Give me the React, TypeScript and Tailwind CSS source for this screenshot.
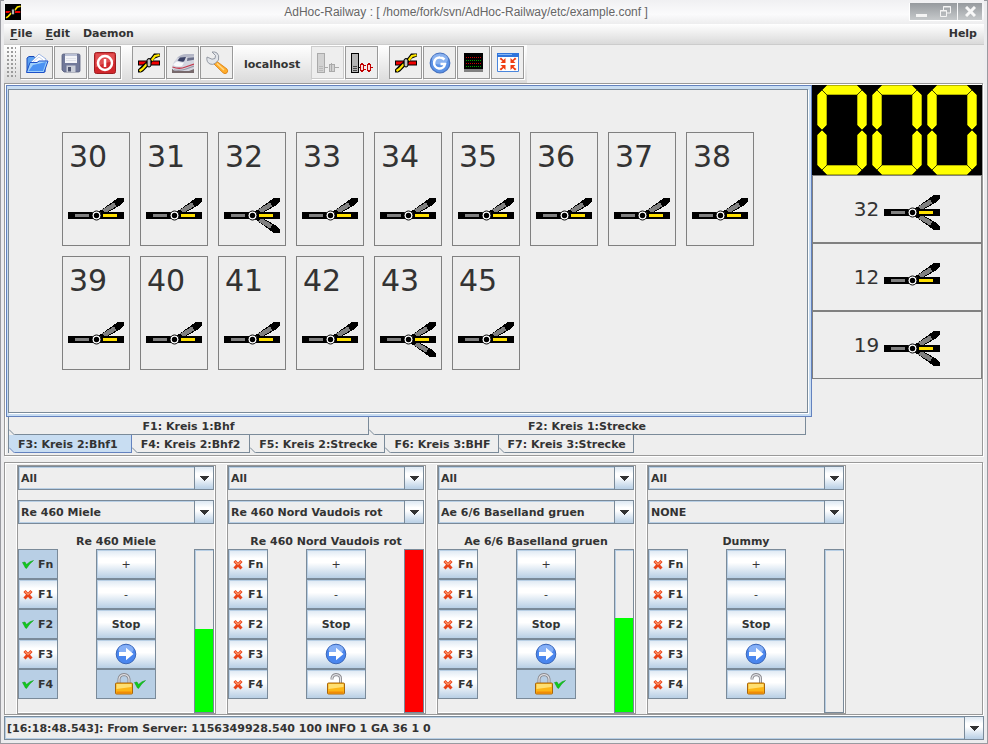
import React from "react";

type IconProps = { className?: string };

const bevel = "bg-[linear-gradient(#dde8f3,#ffffff_30%,#ffffff_45%,#b8cfe5)]";
const etched = "border border-[#999999] shadow-[inset_1px_1px_white,1px_1px_white]";

/* ---------- track drawings ---------- */

function Turnout({ threeWay = false }: { threeWay?: boolean }) {
  return (
    <svg width="56" height="35" viewBox="0 0 56 35" shapeRendering="crispEdges" aria-hidden="true">
      <path d="M29 15 50 0h6v4L51 8 35 17z" fill="#000" />
      <path d="M34.500 11.500 46 4.500l2.500 3.500L37.500 15z" fill="#808080" />
      {threeWay && (
        <>
          <path d="M29 20 50 35h6v-4l-5-4-16-9z" fill="#000" />
          <path d="M34.500 23.500 46 30.500l2.500-3.500L37.500 20z" fill="#808080" />
        </>
      )}
      <path d="M0 14h56v7H0z" fill="#000" />
      <path d="M7 16h14v3H7z" fill="#808080" />
      <path d="M35 16h14v3H35z" fill="#ffe000" />
      <g shapeRendering="auto">
        <circle cx="28.500" cy="17.500" r="4.500" fill="#fff" stroke="#000" strokeWidth="1" />
        <circle cx="28.500" cy="17.500" r="2.700" fill="#000" />
      </g>
    </svg>
  );
}

function CrossingIcon({ className = "h-[22px] w-[22px]" }: IconProps) {
  return (
    <svg className={className} viewBox="0 0 22 22" aria-hidden="true">
      <path d="M0 8.500h22v5H0z" fill="#000" />
      <path d="M1 9.500h8v3H1zM13 9.500h8v3h-8z" fill="#f00000" />
      <path d="M0 20.500v-3l4-4 9-8 3-4h6v3l-5 2-5 6-7 7-2 1z" fill="#000" />
      <path d="M1.500 19 4.500 17 9 12M13.500 8.500 17 4l4.500-1" stroke="#ffe800" strokeWidth="2.200" fill="none" />
      <rect x="9" y="6.500" width="4" height="8.500" rx="2" fill="#999" stroke="#000" />
      <path d="M11 8v6" stroke="#eee" />
    </svg>
  );
}

function FolderIcon() {
  return (
    <svg width="24" height="22" viewBox="0 0 24 22" aria-hidden="true">
      <path d="M2 20V6l2-1.500h5l2 2h9V20z" fill="#5aa0f0" stroke="#1848b8" />
      <path d="m5 11 9-9 7 5-1 9H6z" fill="#fff" stroke="#8aa8e0" strokeWidth=".8" />
      <path d="m8 10 6-5 4 3" fill="none" stroke="#c9d6ee" />
      <path d="M1.500 20.500 5 10.500h7l2-1.500h9l-4 11.500z" fill="#9fd0fb" stroke="#1c50c8" />
      <path d="M3.500 19 8 13l13-3-3 9z" fill="#2f7df0" opacity=".75" />
    </svg>
  );
}

function FloppyIcon() {
  return (
    <svg width="20" height="20" viewBox="0 0 20 20" aria-hidden="true">
      <path d="M1 2.500Q1 1 2.500 1h15Q19 1 19 2.500v15q0 1.500-1.500 1.500H3l-2-2z" fill="#71799a" stroke="#565d7c" strokeWidth=".8" />
      <path d="M4 1h12v9H4z" fill="#f3f4f8" />
      <path d="M4 1h12v2H4z" fill="#b9c0d5" />
      <path d="M5.500 12.500h9V19h-9z" fill="#c9cdd8" />
      <path d="M7 14h3v4.500H7z" fill="#4d5470" />
      <path d="M5 5.500h10M5 7.500h10" stroke="#d4d8e2" strokeWidth=".7" />
    </svg>
  );
}

function PowerIcon() {
  return (
    <svg width="24" height="24" viewBox="0 0 24 24" aria-hidden="true">
      <rect x="1.500" y="1.500" width="21" height="21" rx="2" fill="#d0272c" stroke="#9c1c20" />
      <path d="M2.500 2.500h19v8q-9 0-19 6z" fill="#ec6a6c" opacity=".6" />
      <circle cx="12" cy="12" r="7" fill="none" stroke="#fff" strokeWidth="2.500" />
      <path d="M12 8v8" stroke="#fff" strokeWidth="2.500" />
    </svg>
  );
}

function TrainIcon() {
  return (
    <svg width="22" height="20" viewBox="0 0 22 20" aria-hidden="true">
      <path d="M0 16h22v4H0z" fill="#77696c" />
      <path d="M22 1v15l-5 2H5q-5 0-5-4 1-5 5-9 4-4 10-4z" fill="#d3d5e0" />
      <path d="M5 5q4-4 10-4h7v2.500l-8 .5z" fill="#b3b6c6" />
      <path d="M5.500 7.500 8 4.500l6-.5-2 4.500q-3.500.5-6.500-1z" fill="#3b4267" />
      <path d="m15.500 4.800 6.500-.6v2.600l-7 1.200z" fill="#6a6f8a" />
      <path d="M1 12q2-3 4-3.500 3 1.500 7 1L10 13q-4 1.500-9-1z" fill="#f8f9fc" />
      <path d="M.5 14q7 2.500 13 0L22 11" stroke="#c43a4c" strokeWidth="1.300" fill="none" />
      <path d="M2 17q7 1 12-1l8-3" stroke="#9a98a6" strokeWidth="1.200" fill="none" />
    </svg>
  );
}

function WrenchIcon() {
  return (
    <svg width="24" height="24" viewBox="0 0 24 24" aria-hidden="true">
      <path d="M12 10.500 22 18q1.500 2 0 3.800-2 1.700-4 0L9 13z" fill="#ffad2b" stroke="#d97a0b" strokeWidth=".8" />
      <path d="m12 12.500 7 6.500" stroke="#ffd98c" strokeWidth="1.500" />
      <path d="M2 6q-1 5 3 7 3 1 5-.5L13.500 9Q14.500 4 12 2q-2-1.500-5-1l3.500 3.500-.5 3-3 .7z" fill="#e2e5ea" stroke="#8a909b" strokeWidth=".9" />
    </svg>
  );
}

function PlugIcon({ dim = false }: { dim?: boolean }) {
  const line = dim ? "#aaaaaa" : "#000000";
  const body = dim ? "#d2d2d2" : "#b4b4b4";
  const plug = dim ? "#aaaaaa" : "#c00000";
  const plugFill = dim ? "#d2d2d2" : "#ffd8d8";
  return (
    <svg width="22" height="20" viewBox="0 0 22 20" shapeRendering="crispEdges" aria-hidden="true">
      <path d="M.5.500h7v19h-7z" fill={body} stroke={line} />
      <path d="M2 13.500h4M2 15.500h4M2 17.500h4" stroke={line} strokeWidth="1" opacity=".6" />
      <path d="M8 14.500h3" stroke={line} />
      {dim ? (
        <>
          <path d="M12.500 11.500h5v7h-5z" fill={plugFill} stroke={plug} />
          <path d="M18 14.500h4M14.500 10v9" stroke={plug} />
        </>
      ) : (
        <>
          <path d="M9.500 11.500h3v6h-3zM16.500 11.500h3v6h-3z" fill={plugFill} stroke={plug} />
          <path d="M10 10.500h2M10 18.500h2M17 10.500h2M17 18.500h2M13 12.500h2M13 16.500h2M20 14.500h2" stroke={plug} />
        </>
      )}
    </svg>
  );
}

function GlobeLetterIcon() {
  return (
    <svg width="22" height="22" viewBox="0 0 22 22" aria-hidden="true">
      <circle cx="11" cy="11" r="9.800" fill="#5b92e6" stroke="#4672c0" strokeWidth="1.200" />
      <ellipse cx="11" cy="7" rx="8" ry="5.500" fill="#a8c8f7" opacity=".6" />
      <path d="M15.500 7.500Q13.500 5.500 11 5.500a5.500 5.500 0 1 0 5 6.500H11.500" fill="none" stroke="#fff" strokeWidth="2.500" />
    </svg>
  );
}

const boardDots = [2, 4, 6, 8, 10, 12, 14, 16];

function BoardIcon() {
  return (
    <svg width="19" height="19" viewBox="0 0 19 19" shapeRendering="crispEdges" aria-hidden="true">
      <path d="M0 0h19v19H0z" fill="#808080" />
      <path d="M0 0h19v16H0z" fill="#000" />
      {boardDots.map((x) => (
        <g key={x}>
          <rect x={x} y="4" width="1" height="1" fill="#d00000" />
          <rect x={x} y="7" width="1" height="1" fill="#00a000" />
          <rect x={x} y="10" width="1" height="1" fill="#d00000" />
          <rect x={x} y="13" width="1" height="1" fill="#00a000" />
        </g>
      ))}
    </svg>
  );
}

function FullscreenIcon() {
  return (
    <svg width="22" height="19" viewBox="0 0 22 19" aria-hidden="true">
      <path d="M.5.500h21v18H.5z" fill="#fff" stroke="#4a86dc" />
      <path d="M0 0h22v4H0z" fill="#2f74dc" />
      <path d="M1 1h14v1H1z" fill="#86b6f4" />
      <path d="M8.500 10H3.500L5.500 8 2.500 6 4 4.500 6.500 7l2-2zM13.500 10h5l-2-2 3-2L18 4.500 15.500 7l-2-2zM8.500 12h-5l2 2-3 2L4 17.500 6.500 15l2 2zM13.500 12h5l-2 2 3 2-1.500 1.500L15.500 15l-2 2z" fill="#f03c10" />
    </svg>
  );
}

function CheckIcon() {
  return (
    <svg width="12" height="9" viewBox="0 0 12 9" className="shrink-0" aria-hidden="true">
      <path d="M.5 2.500 3 2l1.500 2.500Q8 1 11.500.500 7 4 4.500 8.500L3.500 8z" fill="#12c81e" stroke="#0a9a14" strokeWidth=".5" />
    </svg>
  );
}

function CrossIcon() {
  return (
    <svg width="12" height="11" viewBox="0 0 12 11" className="shrink-0" aria-hidden="true">
      <path d="m2.500 2 7 7.500M9.500 2l-7 7.500" stroke="#e8431a" strokeWidth="3" />
      <path d="M3 2.500 6 5.500 9 2.500" stroke="#ff9468" strokeWidth="1.200" fill="none" />
    </svg>
  );
}

function ArrowIcon() {
  return (
    <svg width="22" height="22" viewBox="0 0 22 22" aria-hidden="true">
      <circle cx="11" cy="11" r="9.800" fill="#4a86ee" stroke="#3a66b8" />
      <ellipse cx="11" cy="6.500" rx="7.500" ry="4.500" fill="#a6c6fa" opacity=".65" />
      <path d="M4 9h7V4.800L18.500 11 11 17.200V13H4z" fill="#fff" />
    </svg>
  );
}

function LockIcon({ open = false }: { open?: boolean }) {
  const shackle = open ? "M6 6.500V5q.5-3 4-3.500 4.500.5 4.500 4v6" : "M5 11V6q.5-4 5-4.500 4.500.5 5 4.500v5";
  return (
    <svg width="20" height="22" viewBox="0 0 20 22" className="shrink-0" aria-hidden="true">
      <path d={shackle} fill="none" stroke="#8b8b90" strokeWidth="3" />
      <path d={shackle} fill="none" stroke="#e2e2e6" strokeWidth="1.200" />
      <rect x="1.500" y="10" width="17" height="11" rx="1" fill="#fdb515" stroke="#a8660c" />
      <path d="M2.500 11h15v3l-15 2z" fill="#ffe680" opacity=".85" />
      <path d="M2.500 18.500h15v2h-15z" fill="#f08a08" />
    </svg>
  );
}

/* ---------- window frame ---------- */

function TitleBar() {
  return (
    <header className="flex h-6 items-center bg-[linear-gradient(#f0f0f2,#fbfbfc_60%,#ededee)] pr-0.5">
      <span className="ml-px flex h-4 w-4 items-center justify-center bg-black">
        <CrossingIcon className="h-4 w-4" />
      </span>
      <h1 className="flex-1 pl-0.5 text-center font-['Liberation_Sans',sans-serif] text-[12px] font-normal leading-4 text-[#666666]">
        AdHoc-Railway : [ /home/fork/svn/AdHoc-Railway/etc/example.conf ]
      </h1>
      <div className="flex h-[18px] gap-px border-b border-l border-white">
        <div className="flex w-[47px] bg-[linear-gradient(#969a9e,#c6c9cb)]">
          <button aria-label="Minimize" className="flex flex-1 justify-center pt-[11px]">
            <span className="h-[3px] w-[11px] bg-[#f4f4f4]" />
          </button>
          <button aria-label="Restore" className="flex flex-1 items-center justify-center">
            <svg width="11" height="11" viewBox="0 0 11 11" fill="none" stroke="#f4f4f4">
              <path d="M.5 4.500h6v6h-6zM3.500 4V.500h7v6.500H7" />
              <path d="M3 1h8M0 5h7" />
            </svg>
          </button>
        </div>
        <button aria-label="Close" className="flex w-6 items-center justify-center bg-[linear-gradient(#969a9e,#c6c9cb)]">
          <svg width="11" height="11" viewBox="0 0 11 11" stroke="#f8f8f8" strokeWidth="3">
            <path d="m1 1 9 9M10 1l-9 9" />
          </svg>
        </button>
      </div>
    </header>
  );
}

function MenuBar() {
  return (
    <nav className="flex h-[21px] items-center gap-[13px] border-b border-[#cccccc] bg-[linear-gradient(#ffffff,#dadada)] px-1.5">
      <button className="leading-4"><u className="underline-offset-2">F</u>ile</button>
      <button className="leading-4"><u className="underline-offset-2">E</u>dit</button>
      <button className="leading-4">Daemon</button>
      <button className="ml-auto mr-px leading-4">Help</button>
    </nav>
  );
}

function ToolButton({ label, disabled, children }: { label: string; disabled?: boolean; children: React.ReactNode }) {
  return (
    <button
      aria-label={label}
      disabled={disabled}
      className="flex h-[33px] w-[33px] items-center justify-center border border-[#999999] bg-[#eeeeee] shadow-[1px_1px_white] disabled:border-[#cccccc]"
    >
      {children}
    </button>
  );
}

function ToolBar() {
  return (
    <div className="flex h-[38px]">
      <div className="flex items-start gap-[11px] bg-[linear-gradient(#ffffff,#dadada)] pl-0.5 pr-[3px] pt-px">
        <div className="flex gap-px">
          <span className="mr-[3px] h-[33px] w-2.5 bg-[radial-gradient(circle,#999999_0.7px,transparent_1px)] bg-[size:4px_4px]" />
          <ToolButton label="Open"><FolderIcon /></ToolButton>
          <ToolButton label="Save"><FloppyIcon /></ToolButton>
          <ToolButton label="Exit"><PowerIcon /></ToolButton>
        </div>
        <div className="flex gap-px">
          <ToolButton label="Switches"><CrossingIcon /></ToolButton>
          <ToolButton label="Locomotives"><TrainIcon /></ToolButton>
          <ToolButton label="Preferences"><WrenchIcon /></ToolButton>
        </div>
        <span className="self-center leading-4">localhost</span>
        <div className="flex gap-px">
          <ToolButton label="Connect" disabled><PlugIcon dim /></ToolButton>
          <ToolButton label="Disconnect"><PlugIcon /></ToolButton>
        </div>
        <div className="flex gap-px">
          <ToolButton label="Switch control"><CrossingIcon /></ToolButton>
          <ToolButton label="Refresh"><GlobeLetterIcon /></ToolButton>
          <ToolButton label="Console"><BoardIcon /></ToolButton>
          <ToolButton label="Fullscreen"><FullscreenIcon /></ToolButton>
        </div>
      </div>
    </div>
  );
}

/* ---------- switch panel ---------- */

const switches = [30, 31, 32, 33, 34, 35, 36, 37, 38, 39, 40, 41, 42, 43, 45];
const threeWaySwitches = [32, 43, 19];

function SwitchCell({ id }: { id: number }) {
  return (
    <div className="flex h-[114px] w-[68px] flex-col gap-[25px] border border-[#808080] px-[5px] pt-2">
      <span className="pl-px font-['DejaVu_Sans',sans-serif] text-[30px] font-normal leading-8">{id}</span>
      <Turnout threeWay={threeWaySwitches.includes(id)} />
    </div>
  );
}

function Tab({ label, className, selected = false }: { label: string; className: string; selected?: boolean }) {
  return (
    <button
      role="tab"
      aria-selected={selected}
      className={
        "relative h-[18px] border-b border-r pt-0.5 text-center leading-[15px] whitespace-nowrap " +
        (selected ? "border-[#6382bf] bg-[#c8ddf2] " : "border-[#7a8a99] ") +
        className
      }
    >
      {label}
      <svg className="absolute -bottom-px left-0" width="6" height="6" viewBox="0 0 6 6" aria-hidden="true">
        <path d="M0 0v6h6z" fill="#eeeeee" />
        <path d="m0 .5 5.500 5.500" stroke={selected ? "#6382bf" : "#7a8a99"} />
      </svg>
    </button>
  );
}

function SwitchTabs() {
  return (
    <section className="min-w-0 flex-1 pb-0.5">
      <div className="border border-[#6382bf] bg-[#c8ddf2] pb-[3px] pl-px pr-[3px] pt-[3px]">
        <div className="flex min-h-[324px] justify-center border border-[#7a8a99] bg-[#eeeeee] px-4 pb-[42px] pt-[42px] shadow-[1px_1px_white]">
          <div className="grid grid-cols-9 content-start gap-2.5">
            {switches.map((id) => (
              <SwitchCell key={id} id={id} />
            ))}
          </div>
        </div>
      </div>
      <div role="tablist" className="ml-0.5 mr-1.5 border-l border-[#7a8a99]">
        <div className="flex">
          <Tab label="F1: Kreis 1:Bhf" className="basis-0 grow-[360]" />
          <Tab label="F2: Kreis 1:Strecke" className="basis-0 grow-[437]" />
        </div>
        <div className="flex">
          <Tab label="F3: Kreis 2:Bhf1" className="pl-[9px] pr-[13px]" selected />
          <Tab label="F4: Kreis 2:Bhf2" className="pl-[9px] pr-[9px]" />
          <Tab label="F5: Kreis 2:Strecke" className="pl-[9px] pr-[7px]" />
          <Tab label="F6: Kreis 3:BHF" className="pl-[9px] pr-[7px]" />
          <Tab label="F7: Kreis 3:Strecke" className="pl-[9px] pr-[7px]" />
        </div>
      </div>
    </section>
  );
}

const zeroSegments = [
  "5,5 10,0 40,0 45,5 40,10 10,10",
  "5,5 10,10 10,40 5,45 0,40 0,10",
  "45,5 50,10 50,40 45,45 40,40 40,10",
  "5,45 10,50 10,80 5,85 0,80 0,50",
  "45,45 50,50 50,80 45,85 40,80 40,50",
  "5,85 10,80 40,80 45,85 40,90 10,90",
];

function DigitalDisplay() {
  return (
    <svg width="170" height="90" viewBox="0 0 170 90" className="block bg-black" role="img" aria-label="000">
      {[5, 60, 115].map((x) => (
        <g key={x} transform={`translate(${x} 0)`} fill="#ffff00" stroke="#000" strokeWidth=".6">
          {zeroSegments.map((points) => (
            <polygon key={points} points={points} />
          ))}
        </g>
      ))}
    </svg>
  );
}

function History() {
  return (
    <aside className="w-[170px] shrink-0">
      <DigitalDisplay />
      {[32, 12, 19].map((id) => (
        <div key={id} className="flex h-[68px] items-center justify-center gap-[5px] border border-[#808080]">
          <span className="font-['DejaVu_Sans',sans-serif] text-[20px] font-normal leading-6">{id}</span>
          <div className="pt-[7px]">
            <Turnout threeWay={threeWaySwitches.includes(id)} />
          </div>
        </div>
      ))}
    </aside>
  );
}

/* ---------- throttles ---------- */

function Combo({ label, value }: { label: string; value: string }) {
  return (
    <div className="relative">
      <select
        aria-label={label}
        defaultValue={value}
        className="block h-6 w-full appearance-none border border-[#7a8a99] bg-[#eeeeee] pl-0.5 pr-6 pt-0.5 leading-5 shadow-[inset_0_0_0_1px_#b8cfe5]"
      >
        <option>{value}</option>
      </select>
      <span className={"pointer-events-none absolute inset-y-0 right-0 flex w-5 items-center justify-center border border-[#7a8a99] " + bevel}>
        <svg width="10" height="5" viewBox="0 0 10 5" shapeRendering="crispEdges" aria-hidden="true">
          <path d="M0 0h10L5 5z" fill="#333333" />
        </svg>
      </span>
    </div>
  );
}

type Loco = {
  name: string;
  combo: string;
  on: string[];
  locked: boolean;
  speed: number;
};

const locos: Loco[] = [
  { name: "Re 460 Miele", combo: "Re 460 Miele", on: ["Fn", "F2", "F4"], locked: true, speed: 51 },
  { name: "Re 460 Nord Vaudois rot", combo: "Re 460 Nord Vaudois rot", on: [], locked: false, speed: 100 },
  { name: "Ae 6/6 Baselland gruen", combo: "Ae 6/6 Baselland gruen", on: [], locked: true, speed: 58 },
  { name: "Dummy", combo: "NONE", on: [], locked: false, speed: 0 },
];

const key = "flex h-[30px] items-center border border-[#7a8a99] leading-4 ";
const raised = bevel + " shadow-[inset_1px_1px_#b8cfe5]";
const pressed = "bg-[#b8cfe5]";

function Throttle({ loco }: { loco: Loco }) {
  return (
    <section className="w-[199px] border border-[#999999] pr-px shadow-[inset_-1px_-1px_white,-1px_0_white]">
      <Combo label="Group" value="All" />
      <div className="pt-2.5">
        <Combo label="Locomotive" value={loco.combo} />
      </div>
      <h2 className="pt-[11px] text-center leading-[14px]">{loco.name}</h2>
      <div className="flex justify-between">
        <div className="w-10">
          {["Fn", "F1", "F2", "F3", "F4"].map((name) => {
            const on = loco.on.includes(name);
            return (
              <button key={name} aria-pressed={on} className={key + "w-full gap-1 pl-[3px] " + (on ? pressed : raised)}>
                {on ? <CheckIcon /> : <CrossIcon />}
                <span className="pt-0.5">{name}</span>
              </button>
            );
          })}
        </div>
        <div className="w-[60px]">
          <button className={key + "w-full justify-center pt-0.5 font-normal " + raised}>+</button>
          <button className={key + "w-full justify-center pt-0.5 font-normal " + raised}>-</button>
          <button className={key + "w-full justify-center pt-0.5 " + raised}>Stop</button>
          <button aria-label="Direction" className={key + "w-full justify-center " + raised}>
            <ArrowIcon />
          </button>
          <button
            aria-label="Lock"
            aria-pressed={loco.locked}
            className={key + "w-full justify-center " + (loco.locked ? "pl-2 " + pressed : raised)}
          >
            <LockIcon open={!loco.locked} />
            {loco.locked && <CheckIcon />}
          </button>
        </div>
        <div
          role="meter"
          aria-label="Speed"
          aria-valuenow={loco.speed}
          className="flex h-[164px] w-5 flex-col justify-end border border-[#7a8a99] shadow-[inset_1px_1px_#b8cfe5]"
        >
          <div className={loco.speed === 100 ? "bg-[#ff0000]" : "bg-[#00ff00]"} style={{ height: `${loco.speed}%` }} />
        </div>
      </div>
    </section>
  );
}

export default function App() {
  return (
    <div className="flex min-h-screen flex-col border border-t-0 border-[#999aa0] bg-[#ececee] px-[3px] pb-[3px] font-['DejaVu_Sans',sans-serif] text-[11px] font-bold text-[#333333] shadow-[inset_0_1px_#999aa0]">
      <TitleBar />
      <div className="flex flex-1 flex-col bg-[#eeeeee]">
        <MenuBar />
        <ToolBar />
        <main>
          <div className={"mr-px flex pl-px pt-px " + etched}>
            <SwitchTabs />
            <History />
          </div>
          <div className={"mr-px mt-1.5 flex gap-[11px] overflow-hidden px-3 pt-0.5 " + etched}>
            {locos.map((loco) => (
              <Throttle key={loco.name} loco={loco} />
            ))}
          </div>
        </main>
        <footer className="mt-px">
          <Combo label="Messages" value="[16:18:48.543]: From Server: 1156349928.540 100 INFO 1 GA 36 1 0" />
        </footer>
      </div>
    </div>
  );
}
